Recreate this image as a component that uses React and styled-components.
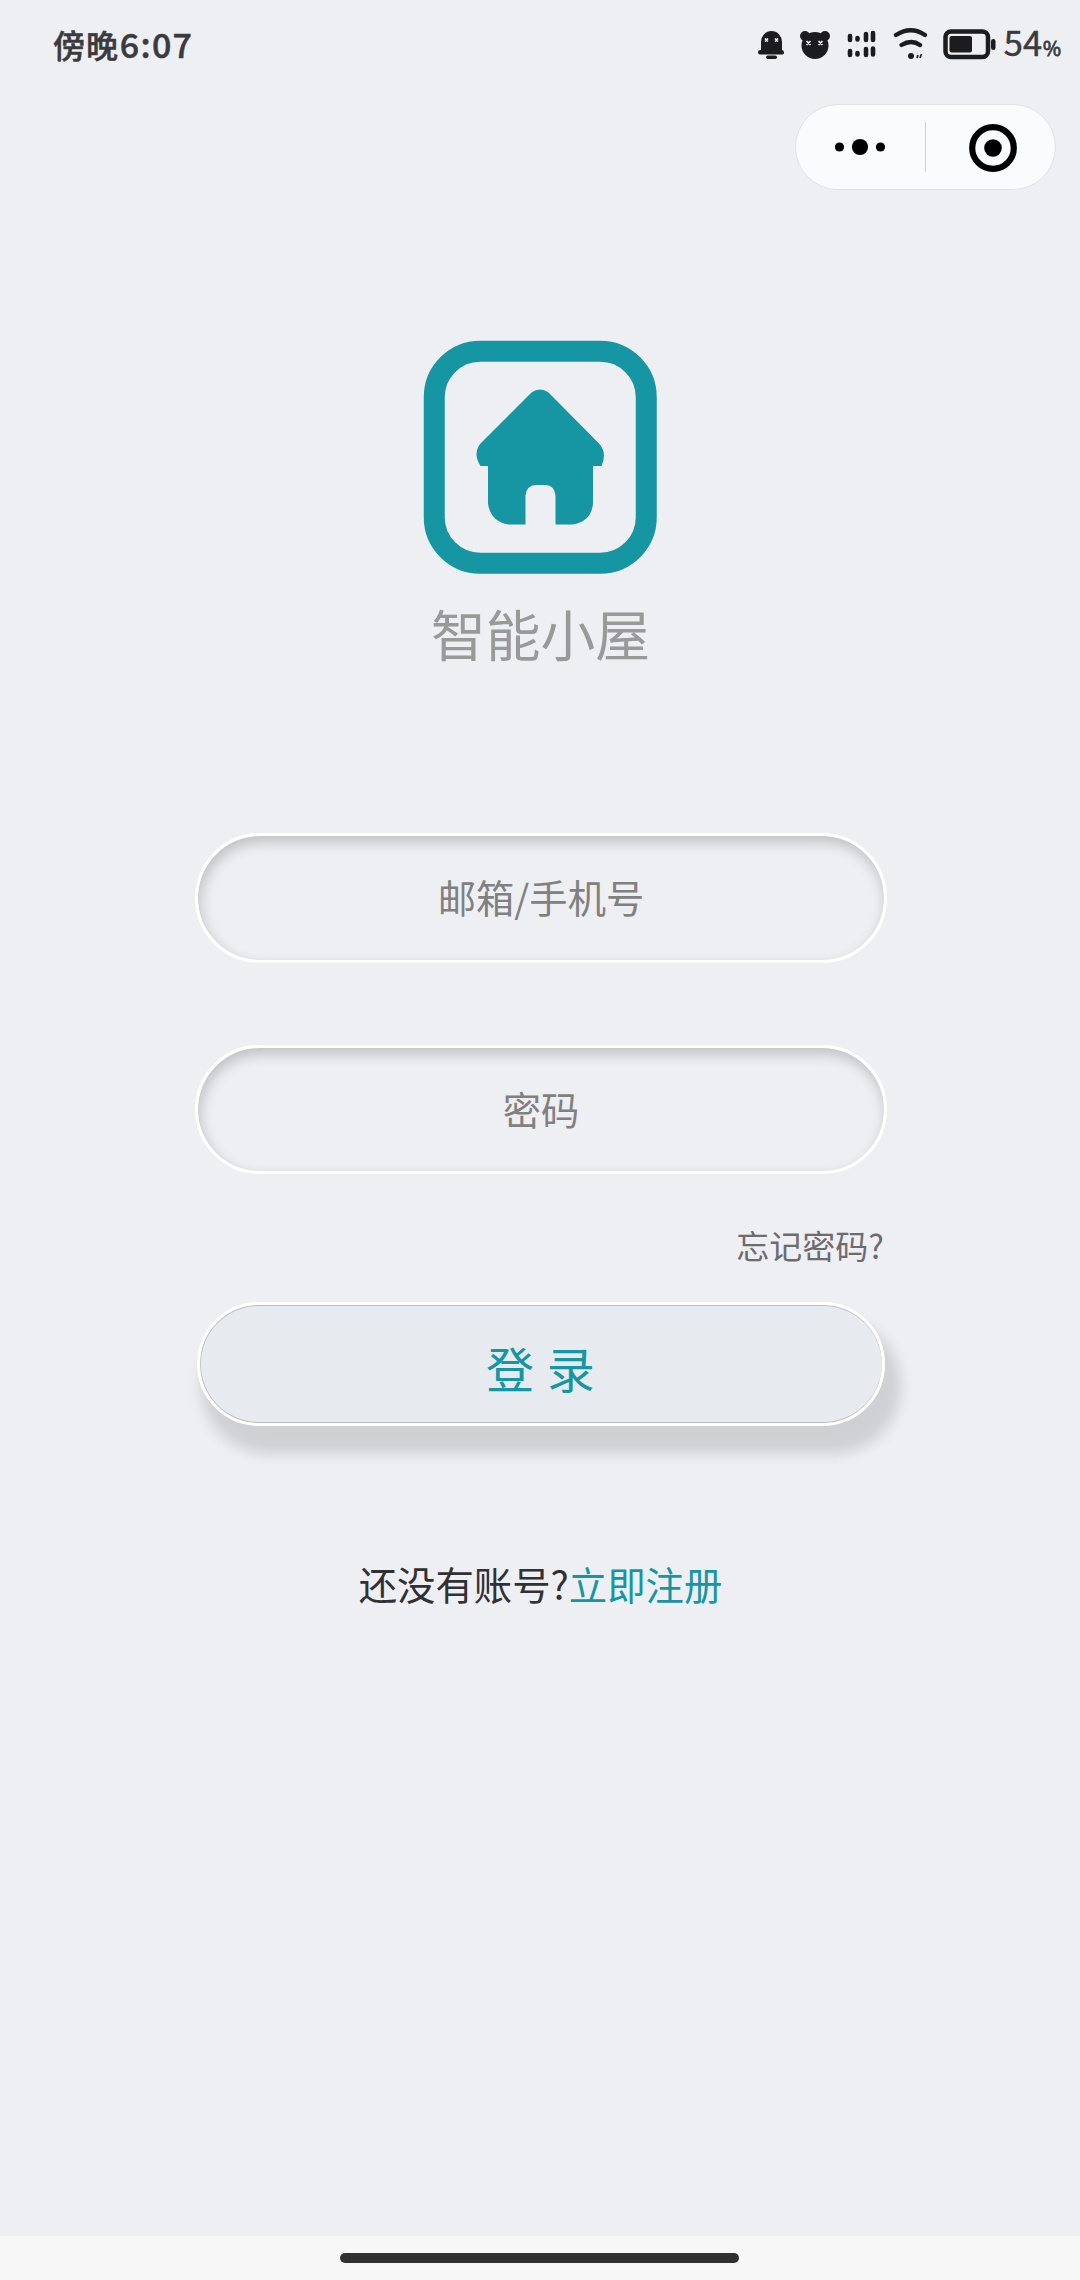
import React from "react";
import styled, { createGlobalStyle } from "styled-components";

const TEAL = "#1696a3";

const GlobalStyle = createGlobalStyle`
  * { box-sizing: border-box; }
  body {
    margin: 0;
    background: #eeeff3;
    font-family: "Noto Sans CJK SC", "Noto Sans", sans-serif;
  }
`;

const Screen = styled.div`
  width: 1080px;
  height: 2280px;
  display: flex;
  flex-direction: column;
  background: #eeeff3;
  overflow: hidden;
`;

const StatusBar = styled.header`
  height: 90px;
  flex: none;
  display: flex;
  align-items: center;
  justify-content: space-between;
  padding: 0 19px 2px 53px;
  color: #3b3b3e;
`;

const Clock = styled.div`
  display: flex;
  align-items: center;
  font-size: 32px;
  line-height: 48px;
  font-weight: 500;
  letter-spacing: 0.9px;
  -webkit-text-stroke: 0.5px #3b3b3e;
`;

const Digits = styled.span`
  margin-left: 1px;
  font-size: 34px;
  letter-spacing: 1.3px;
`;

const StatusIcons = styled.div`
  display: flex;
  align-items: center;
`;

const Battery = styled.div`
  display: flex;
  align-items: baseline;
  margin-left: 8px;
  font-size: 34.5px;
  line-height: 48px;
  font-weight: 400;
  -webkit-text-stroke: 0.5px #3b3b3e;
`;

const Percent = styled.span`
  margin-left: 1px;
  font-size: 19.5px;
  -webkit-text-stroke: 0.8px #3b3b3e;
`;

const MenuRow = styled.div`
  display: flex;
  justify-content: flex-end;
  flex: none;
  padding: 14px 24px 0 0;
`;

const Capsule = styled.div`
  width: 261px;
  height: 86px;
  display: flex;
  align-items: center;
  border: 1px solid #e0e2e4;
  border-radius: 43px;
  background: #fafbfc;
`;

const CapsuleButton = styled.button`
  width: ${(p) => p.$width};
  height: 100%;
  display: flex;
  align-items: center;
  justify-content: center;
  padding: ${(p) => p.$pad};
  border: 0;
  background: none;
`;

const Divider = styled.span`
  width: 1px;
  height: 50px;
  background: #cfd1d3;
`;

const Main = styled.main`
  flex: 1;
  display: flex;
  flex-direction: column;
  align-items: center;
  padding-top: 150px;
`;

const AppName = styled.h1`
  margin: 18px 0 0 1px;
  font-size: 54.8px;
  line-height: 80px;
  font-weight: 400;
  color: #999999;
`;

const Form = styled.form`
  width: 692px;
  margin: 161px 0 0 2px;
  display: flex;
  flex-direction: column;
  align-items: center;
`;

const Field = styled.input`
  width: 692px;
  height: ${(p) => p.$height};
  margin-bottom: 82px;
  padding: 0 0 3px;
  border: 3px solid #ffffff;
  border-radius: 65px;
  outline: 0;
  background: #eeeff3;
  box-shadow: inset 2px 6px 14px rgba(0, 0, 0, 0.2);
  font-family: inherit;
  font-size: 38.3px;
  text-align: center;
  color: #333;

  &::placeholder {
    color: #808080;
    opacity: 1;
  }
`;

const Forgot = styled.a`
  align-self: flex-end;
  margin: -35px 3px 0 0;
  font-size: 33px;
  line-height: 48px;
  color: #6c6c70;
`;

const LoginButton = styled.button`
  width: 688px;
  height: 124px;
  margin-top: 33px;
  padding: 5px 1px 0 0;
  border: 3px solid #ffffff;
  border-radius: 62px;
  background: #e7ebf0;
  box-shadow:
    10px 22px 14px 6px rgba(0, 0, 0, 0.13),
    inset 0 1px 0 #b9bdc1,
    inset 0 -1px 0 #b9bdc1,
    inset 1px 0 0 #c3c7cb;
  font-family: inherit;
  font-size: 48px;
  word-spacing: 2px;
  color: ${TEAL};
`;

const Register = styled.p`
  margin: 129px 0 0 1px;
  font-size: 38.4px;
  line-height: 56px;
  color: #303035;
`;

const RegisterLink = styled.a`
  color: ${TEAL};
`;

const NavBar = styled.footer`
  height: 44px;
  flex: none;
  display: flex;
  justify-content: center;
  align-items: center;
  padding-right: 2px;
  background: #f7f7f7;
`;

const HomeIndicator = styled.span`
  width: 399px;
  height: 10px;
  border-radius: 5px;
  background: #303030;
`;

const StatusGlyphs = () => (
  <svg width="240" height="40" viewBox="756 24 240 40" fill="#1c1c1f">
    <path d="M761 50V42a10.500 11 0 0 1 21 0v8q2 0 2 2.500t-2 2h-22q-2 0-2-2.300t3-2.200z" />
    <rect x="766" y="55.500" width="11" height="3.500" rx="1.700" />
    <circle cx="805" cy="36" r="5" />
    <circle cx="825" cy="36" r="5" />
    <ellipse cx="815" cy="45.500" rx="13.500" ry="13.500" />
    <path
      d="M765 38.500l3 3m0-3l-3 3M775 38.500l3 3m0-3l-3 3M806.500 41l4 4m0-4l-4 4M818.500 41l4 4m0-4l-4 4"
      stroke="#f2f2f4"
      strokeWidth="1.700"
    />
    <path
      d="M850 36v4M857.500 38v1.500M866 34v6M873 33v7M850 51v4M857.500 53v1.500M866 49v6M873 48.500v6"
      fill="none"
      stroke="#1c1c1f"
      strokeWidth="4.600"
      strokeLinecap="round"
    />
    <path
      d="M896 35q15-9.500 29 0M901.500 45q10-6 18.500 0"
      fill="none"
      stroke="#1c1c1f"
      strokeWidth="4.300"
      strokeLinecap="round"
    />
    <circle cx="911" cy="56" r="3" />
    <path d="M918 55l-1 3M921.500 54l-1.500 4" stroke="#1c1c1f" strokeWidth="1.700" />
    <rect x="945.500" y="31.500" width="42.500" height="25.500" rx="5.500" fill="none" stroke="#1c1c1f" strokeWidth="4.500" />
    <rect x="949.500" y="36" width="22.500" height="16.500" rx="2" />
    <rect x="991" y="39" width="4.500" height="11" rx="2.200" />
  </svg>
);

const MoreIcon = () => (
  <svg width="52" height="18" viewBox="0 0 52 18">
    <circle cx="5.500" cy="9" r="4.600" />
    <circle cx="26" cy="9" r="8.100" />
    <circle cx="46.500" cy="9" r="4.600" />
  </svg>
);

const TargetIcon = () => (
  <svg width="48" height="48" viewBox="0 0 48 48">
    <circle cx="24" cy="24" r="20.800" fill="none" stroke="#000" strokeWidth="6.200" />
    <circle cx="24" cy="24" r="8.800" />
  </svg>
);

const Logo = () => (
  <svg width="234" height="234" viewBox="-0.5 -0.5 234 234" fill={TEAL}>
    <rect x="10.750" y="10.750" width="212" height="212" rx="46" fill="none" stroke={TEAL} strokeWidth="21" />
    <path d="M108 52q8.500-6 17 0L175.500 103Q184 112 178 125.500H169.500V163Q168 181 149 184H132V155Q131 145 122 144.500H112Q103 145 102 155V184H85Q67 181 64.500 163V125.500H57Q49 113 57 103Z" />
  </svg>
);

export default function App() {
  return (
    <Screen>
      <GlobalStyle />
      <StatusBar>
        <Clock>
          傍晚<Digits>6:07</Digits>
        </Clock>
        <StatusIcons>
          <StatusGlyphs />
          <Battery>
            54<Percent>%</Percent>
          </Battery>
        </StatusIcons>
      </StatusBar>
      <MenuRow>
        <Capsule>
          <CapsuleButton $width="129px" $pad="0 2px 0 0" aria-label="更多">
            <MoreIcon />
          </CapsuleButton>
          <Divider />
          <CapsuleButton $width="129px" $pad="2px 0 0 4px" aria-label="关闭">
            <TargetIcon />
          </CapsuleButton>
        </Capsule>
      </MenuRow>
      <Main>
        <Logo />
        <AppName>智能小屋</AppName>
        <Form>
          <Field $height="130px" placeholder="邮箱/手机号" />
          <Field $height="129px" type="password" placeholder="密码" />
          <Forgot>忘记密码?</Forgot>
          <LoginButton type="button">登 录</LoginButton>
        </Form>
        <Register>
          还没有账号?<RegisterLink>立即注册</RegisterLink>
        </Register>
      </Main>
      <NavBar>
        <HomeIndicator />
      </NavBar>
    </Screen>
  );
}
